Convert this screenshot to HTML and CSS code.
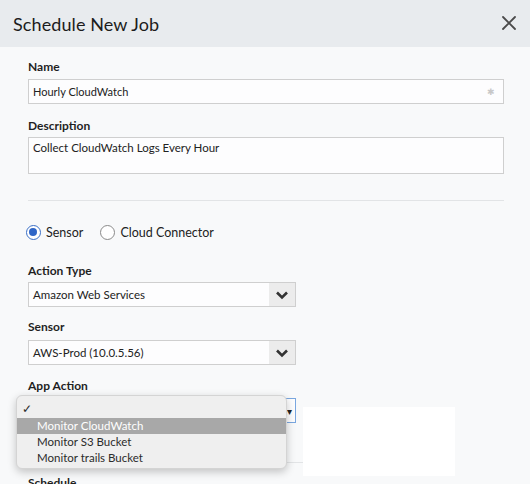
FILE: index.html
```html
<!DOCTYPE html>
<html>
<head>
<meta charset="utf-8">
<link rel="stylesheet" href="styles.css">
</head>
<body>
<div class="modal">
  <div class="header">
    <div class="title">Schedule New Job</div>
    <svg class="close" width="16" height="16" viewBox="0 0 16 16"><path d="M2 2L14 14M14 2L2 14" stroke="#4a4a4a" stroke-width="1.8" stroke-linecap="round"/></svg>
  </div>
  <div class="body">
    <div class="label l-name">Name</div>
    <div class="input">
      <span>Hourly CloudWatch</span>
      <span class="pm">✱</span>
    </div>
    <div class="label l-desc">Description</div>
    <div class="textarea">Collect CloudWatch Logs Every Hour</div>
    <div class="divider"></div>
    <div class="radios">
      <div class="radio"><span class="dot on"></span>Sensor</div>
      <div class="radio"><span class="dot"></span>Cloud Connector</div>
    </div>
    <div class="label l-type">Action Type</div>
    <div class="select">
      <span class="val">Amazon Web Services</span>
      <span class="arrow"><svg width="14" height="10" viewBox="0 0 14 10"><path d="M2 2.5L7 7.5L12 2.5" fill="none" stroke="#333" stroke-width="2.6"/></svg></span>
    </div>
    <div class="label l-sensor">Sensor</div>
    <div class="select s-sensor">
      <span class="val">AWS-Prod (10.0.5.56)</span>
      <span class="arrow"><svg width="14" height="10" viewBox="0 0 14 10"><path d="M2 2.5L7 7.5L12 2.5" fill="none" stroke="#333" stroke-width="2.6"/></svg></span>
    </div>
    <div class="label l-app">App Action</div>
    <div class="appwrap">
      <div class="select focus">
        <span class="val"></span>
        <span class="arrow plain">▾</span>
      </div>
      <div class="divider d2"></div>
      <div class="label l-sched">Schedule</div>
      <div class="menu">
        <div class="opt check">✓</div>
        <div class="opt sel">Monitor CloudWatch</div>
        <div class="opt">Monitor S3 Bucket</div>
        <div class="opt">Monitor trails Bucket</div>
      </div>
      <div class="blank"></div>
    </div>
  </div>
</div>
</body>
</html>
```
FILE: styles.css
```css
* { box-sizing: border-box; }
html, body { margin: 0; padding: 0; }
body {
  width: 530px; height: 484px; overflow: hidden;
  background: #f8f9fa;
  font-family: "Lato", "Liberation Sans", sans-serif;
  color: #222;
}
.modal { width: 530px; height: 484px; }
.header {
  height: 47px; background: #e8ebee;
  display: flex; align-items: center; justify-content: space-between;
  padding: 0 13px 0 13px;
}
.title { font-size: 18px; color: #1c1c1c; letter-spacing: 0.1px; }
.close { margin-top: -2px; }
.body { padding: 0 26px 0 28px; }
.label { font-size: 12px; font-weight: 700; line-height: 16px; color: #1f1f1f; }
.l-name { margin-top: 12px; }
.l-desc { margin-top: 14px; }
.l-type { margin-top: 22px; }
.l-sensor { margin-top: 12px; }
.l-app { margin-top: 13px; }
.input {
  margin-top: 4px; height: 25px; border: 1px solid #cfcfcf; background: #fdfdfe;
  display: flex; align-items: center; justify-content: space-between;
  padding: 0 8px 0 4px; font-size: 11px; color: #222;
}
.pm { color: #c8c8c8; font-size: 9px; }
.textarea {
  margin-top: 3px; height: 37px; border: 1px solid #cfcfcf; background: #fdfdfe;
  padding: 3px 4px; font-size: 11.5px; color: #222;
}
.divider { margin-top: 26px; height: 1px; background: #e2e4e6; }
.radios { margin-top: 22px; display: flex; align-items: center; height: 18px; }
.radio { display: flex; align-items: center; font-size: 12.5px; color: #222; margin-right: 17px; }
.radios .radio:first-child { margin-left: -2px; }
.dot {
  width: 15px; height: 15px; border-radius: 50%; border: 1px solid #8a8a8a;
  background: #fff; margin-right: 5px; display: inline-block; position: relative;
}
.dot.on { border: 1.5px solid #3a6fc6; }
.dot.on::after {
  content: ""; position: absolute; left: 2px; top: 2px; width: 8px; height: 8px;
  border-radius: 50%; background: #2f66c7;
}
.select {
  margin-top: 3px; width: 268px; height: 25px; border: 1px solid #cfcfcf; background: #fdfdfe;
  display: flex; align-items: stretch; justify-content: space-between; font-size: 11.5px;
}
.s-sensor { margin-top: 5px; }
.select .val { padding-left: 4px; display: flex; align-items: center; color: #222; }
.arrow {
  width: 26px; background: #ececec; display: flex; align-items: center; justify-content: center;
}
.arrow.plain { background: transparent; font-size: 10px; color: #222; justify-content: flex-end; padding-right: 3px; }
.select.focus { border: 1px solid #7aa7e0; margin-top: 4px; }
.appwrap { position: relative; }
.d2 { margin-top: 39px; width: 275px; }
.l-sched { margin-top: 12px; }
.menu {
  position: absolute; left: -12px; top: -3px; width: 271px; height: 74px;
  background: #efefef; border-radius: 6px; border: 1px solid #d4d4d4;
  box-shadow: 0 3px 8px rgba(0,0,0,0.22);
  padding-top: 3px; font-size: 11.5px; color: #2b2b2b;
}
.opt { height: 16px; line-height: 16px; padding-left: 20px; }
.opt.check { height: 19px; line-height: 19px; padding-left: 5px; font-size: 12px; }
.opt.sel { background: #a8a8a8; color: #fff; }
.blank {
  position: absolute; left: 275px; top: 9px; width: 152px; height: 69px; background: #fff;
}
```
